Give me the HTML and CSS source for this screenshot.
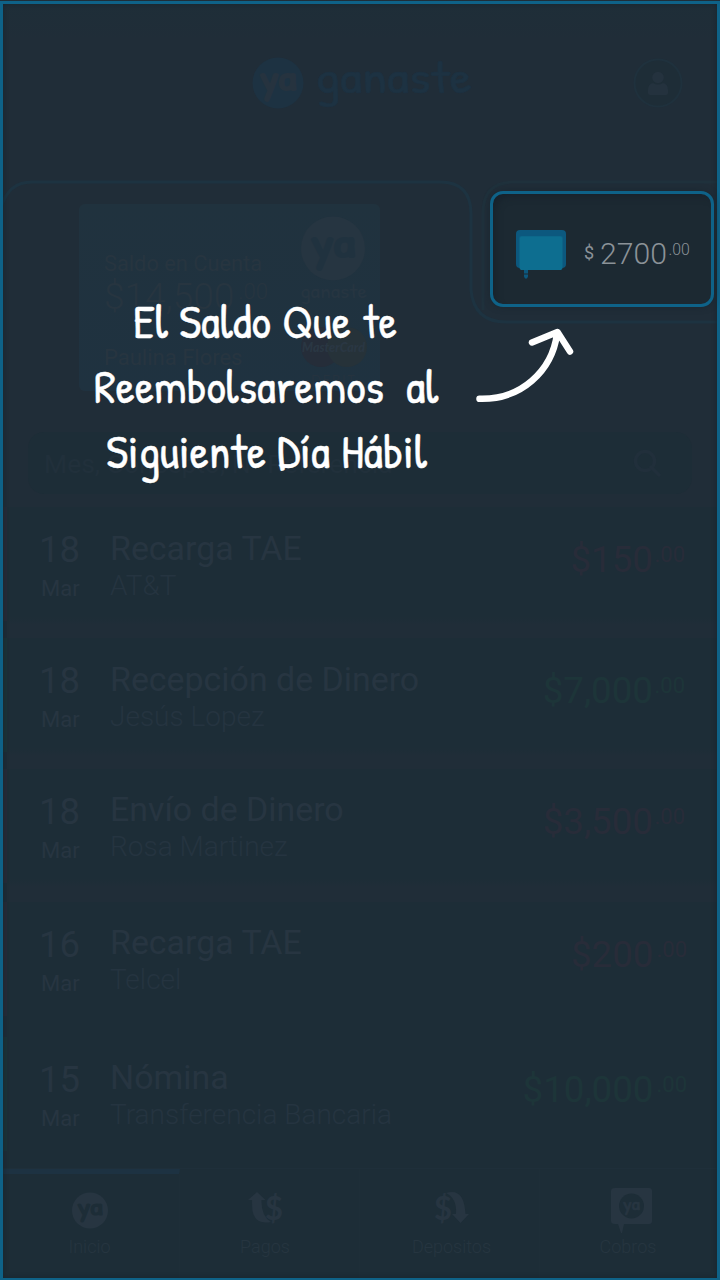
FILE: index.html
```html
<!DOCTYPE html>
<html lang="es">
<head>
<meta charset="utf-8">
<title>ya ganaste</title>
<link rel="stylesheet" href="styles.css">
</head>
<body>
<main class="screen">
  <header class="header">
    <svg class="brand" width="240" height="80" viewBox="0 0 240 80">
      <circle class="blue-fill" cx="30" cy="31" r="25.5"/>
      <text class="mark header-mark" x="12" y="38" textLength="36" lengthAdjust="spacingAndGlyphs">ya</text>
      <text class="wordmark" x="67" y="41" textLength="157" lengthAdjust="spacingAndGlyphs">ganaste</text>
    </svg>
    <svg class="avatar" width="50" height="50" viewBox="0 0 50 50">
      <circle class="avatar-ring" cx="25" cy="25" r="23.5"/>
      <circle class="soft-fill" cx="25" cy="19.5" r="5.8"/>
      <path class="soft-fill" d="M20 25q5 3 10 0q5 1 5 7v3q0 2-2 2H17q-2 0-2-2v-3q0-6 5-7z"/>
    </svg>
  </header>

  <section class="summary">
    <svg class="tabs" width="720" height="150" viewBox="0 0 720 150">
      <path class="tab-quiet" d="M720 4H514Q483 4 483 35V132"/>
      <path class="tab-active" d="M1 30Q8 4 32 4H440Q471 4 471 36V112Q474 144 506 144H720"/>
    </svg>
    <div class="card">
      <div class="card-info">
        <div class="card-label">Saldo en Cuenta</div>
        <div class="card-amount">$14,500<sup>.00</sup></div>
        <div class="card-owner">Paulina Flores</div>
      </div>
      <svg class="card-brand" width="74" height="186" viewBox="0 0 74 186">
        <circle class="card-disc" cx="35" cy="45.500" r="32"/>
        <text class="mark card-mark" x="13" y="54" textLength="44" lengthAdjust="spacingAndGlyphs">ya</text>
        <text class="card-word" x="2" y="95" textLength="67" lengthAdjust="spacingAndGlyphs">ganaste</text>
        <circle class="mc-red" cx="23" cy="144" r="20"/>
        <circle class="mc-gold" cx="49" cy="144" r="20"/>
        <text class="mc-text" x="4" y="149" textLength="63" lengthAdjust="spacingAndGlyphs">MasterCard</text>
        <text class="debit" x="13" y="182" textLength="44">DEBIT</text>
      </svg>
    </div>
  </section>

  <div class="search">
    <span>Mes, Concepto, N° Referencia</span>
    <svg width="28" height="28" viewBox="0 0 28 28"><circle cx="12" cy="12" r="9.5"/><path d="M18 18l8 8"/></svg>
  </div>

  <section class="list">
    <article class="row out"><div class="date"><b>18</b><span>Mar</span></div><div class="detail"><h2>Recarga TAE</h2><p>AT&amp;T</p></div><div class="amount">$150<sup>.00</sup></div></article>
    <article class="row in"><div class="date"><b>18</b><span>Mar</span></div><div class="detail"><h2>Recepción de Dinero</h2><p>Jesús Lopez</p></div><div class="amount">$7,000<sup>.00</sup></div></article>
    <article class="row out third"><div class="date"><b>18</b><span>Mar</span></div><div class="detail"><h2>Envío de Dinero</h2><p>Rosa Martinez</p></div><div class="amount">$3,500<sup>.00</sup></div></article>
    <article class="row out fourth"><div class="date"><b>16</b><span>Mar</span></div><div class="detail"><h2>Recarga TAE</h2><p>Telcel</p></div><div class="amount">$200<sup>.00</sup></div></article>
    <article class="row in fifth"><div class="date"><b>15</b><span>Mar</span></div><div class="detail"><h2>Nómina</h2><p>Transferencia Bancaria</p></div><div class="amount">$10,000<sup>.00</sup></div></article>
  </section>

  <nav class="nav">
    <a class="tab current">
      <svg width="44" height="48" viewBox="0 0 44 48"><circle class="icon-fill" cx="22" cy="24.500" r="18"/><text class="mark nav-mark" x="9.500" y="29" textLength="25" lengthAdjust="spacingAndGlyphs">ya</text></svg>
      <span>Inicio</span>
    </a>
    <a class="tab pagos">
      <svg width="44" height="48" viewBox="0 0 44 48"><path class="icon-fill" d="M14 6L22.500 14H18.500Q18 30 28 36Q12 39 9.500 25Q9 20 9 14H5z"/><text class="dollar" x="22" y="34" textLength="18" lengthAdjust="spacingAndGlyphs">$</text></svg>
      <span>Pagos</span>
    </a>
    <a class="tab depositos">
      <svg width="44" height="48" viewBox="0 0 44 48"><path class="icon-fill" d="M16 7Q34 1 35.500 28H39L30.500 37L22 28H26Q27 12 16 7z"/><text class="dollar" x="4" y="34" textLength="18" lengthAdjust="spacingAndGlyphs">$</text></svg>
      <span>Depositos</span>
    </a>
    <a class="tab cobros">
      <svg width="44" height="48" viewBox="0 0 44 48"><path class="icon-fill" d="M6 2H40Q43 2 43 5V35Q43 38 40 38H15L13 47H12L9 38H6Q2 38 2 35V5Q2 2 6 2z"/><circle class="row-fill" cx="22.500" cy="20" r="12.500"/><text class="mark cobros-mark" x="14" y="24" textLength="17" lengthAdjust="spacingAndGlyphs">ya</text></svg>
      <span>Cobros</span>
    </a>
  </nav>

  <div class="frame"></div>
  <div class="spotlight">
    <svg width="52" height="50" viewBox="0 0 52 50">
      <rect class="note-back" x="1" y="1" width="50" height="38" rx="4"/>
      <rect class="note-edge" x="4" y="7" width="44" height="33" rx="2"/>
      <rect class="note-front" x="5" y="7.500" width="42" height="33.500" rx="1.500"/>
      <path class="note-back" d="M9 41h4v3.500H9zM9 45.500h4v2L12 49.500h-2L9 47.500z"/>
    </svg>
    <span class="currency">$</span><span class="value">2700</span><span class="cents">.00</span>
  </div>
  <svg class="coach" width="720" height="220" viewBox="0 290 720 220">
    <g class="hand">
      <text x="133" y="337.500" textLength="35" lengthAdjust="spacingAndGlyphs">El</text>
      <text x="179" y="337.500" textLength="92" lengthAdjust="spacingAndGlyphs">Saldo</text>
      <text x="282" y="337.500" textLength="69" lengthAdjust="spacingAndGlyphs">Que</text>
      <text x="363" y="337.500" textLength="34" lengthAdjust="spacingAndGlyphs">te</text>
      <text x="94" y="402.500" textLength="290" lengthAdjust="spacingAndGlyphs">Reembolsaremos</text>
      <text x="406" y="402.500" textLength="32.500" lengthAdjust="spacingAndGlyphs">al</text>
      <text x="106" y="467.500" textLength="160" lengthAdjust="spacingAndGlyphs">Siguiente</text>
      <text x="277" y="467.500" textLength="53" lengthAdjust="spacingAndGlyphs">Día</text>
      <text x="341" y="467.500" textLength="86" lengthAdjust="spacingAndGlyphs">Hábil</text>
    </g>
    <path class="arrow" d="M479.500 398.800C521 400 552 371 557 334M532 342.500L557.500 332L570 351.500"/>
  </svg>
</main>
</body>
</html>
```
FILE: styles.css
```css
* { box-sizing: border-box; }
body { margin: 0; background: #202d38; font-family: Roboto, "Liberation Sans", sans-serif; }
.screen { position: relative; width: 720px; height: 1280px; overflow: hidden; display: flex; flex-direction: column; background: linear-gradient(#1e2e38, #202d38 40px); color: #273541; }
text { font-family: "Patrick Hand", Lato, sans-serif; }
.blue-fill { fill: #1d3242; }
.soft-fill { fill: #24323e; }
.icon-fill { fill: #273541; }
.row-fill { fill: #1d2d37; }
.mark { stroke-width: 1.8; }

.header { height: 178px; flex: none; display: grid; grid-template-columns: 1fr 230px 1fr; padding: 52px 37px 0 39px; align-items: start; }
.brand { grid-column: 2; margin-left: 2px; }
.header-mark { font-size: 34px; fill: #26333f; stroke: #26333f; }
.wordmark { font-size: 44px; fill: #1d3242; stroke: #1d3242; stroke-width: .5; }
.avatar { justify-self: end; margin-top: 6px; }
.avatar-ring { fill: #1e2d37; stroke: #1f313d; stroke-width: 2; }

.summary { height: 254px; flex: none; display: grid; }
.tabs, .card { grid-area: 1 / 1; }
.tabs path { fill: none; }
.tab-active { stroke: #1d3341; stroke-width: 3; }
.tab-quiet { stroke: #1f313c; stroke-width: 3; }
.card { width: 301px; height: 187px; margin: 26px 0 0 79px; padding-left: 25px; border-radius: 6px; background: linear-gradient(#20323e, #1f3240); color: #273540; display: flex; justify-content: space-between; white-space: nowrap; }
.card-info { padding-top: 46px; width: 180px; }
.card-label { font-size: 21.800px; line-height: 28px; }
.card-amount { font-size: 37px; line-height: 38px; font-weight: 300; }
.card-amount sup { font-size: 22px; line-height: 0; vertical-align: 10px; margin-left: 4px; }
.card-owner { margin-top: 28px; font-size: 22px; line-height: 28px; }
.card-brand { margin-right: 8px; margin-top: -1px; flex: none; }
.card-disc { fill: #263541; }
.card-mark { font-size: 41px; fill: #20323f; stroke: #20323f; }
.card-word { font-size: 20px; fill: #263541; }
.mc-red { fill: #252d39; }
.mc-gold { fill: #263239; }
.mc-text { font-family: Lato, sans-serif; font-size: 13px; font-weight: 900; font-style: italic; fill: #2a3743; }
.debit { font-family: Lato, sans-serif; font-size: 13px; fill: #25333f; }

.search { width: 664px; height: 62px; flex: none; margin-left: 28px; padding: 0 31px 0 16px; border-radius: 16px; background: #1d2d37; display: flex; align-items: center; justify-content: space-between; font-size: 26.500px; color: #21303b; }
.search svg { fill: none; stroke: #212f3b; stroke-width: 3.500; stroke-linecap: round; }

.list { padding-top: 13px; }
.row { height: 131px; display: grid; grid-template-columns: 107px 1fr auto; padding: 0 35px 0 3px; background: linear-gradient(#1d2d37 110px, #202d38 118px); border-left: 7px solid #272b38; white-space: nowrap; border-image: linear-gradient(#262b38 113px, #1e2c37 113px) 1 / 0 0 0 7px; }
.row.in { border-image-source: linear-gradient(#1c3338 113px, #1e2c37 113px); }
.row.third { height: 133px; }
.row.fourth { height: 135px; }
.row.fourth, .row.fifth { background: #1d2d37; padding-right: 33px; }
.date { padding: 22px 0 0 29px; }
.date b { display: block; font-size: 36.500px; line-height: 42px; font-weight: 400; }
.date span { display: block; margin: 5px 0 0 2px; font-size: 22px; line-height: 26px; }
.detail { padding-top: 22px; margin-left: -7px; }
.detail h2 { margin: 0; font-size: 33.900px; line-height: 40px; font-weight: 400; }
.detail p { margin: 0; font-size: 28px; line-height: 33px; font-weight: 300; color: #253440; }
.third .detail, .fourth .detail, .fifth .detail { padding-top: 21px; }
.amount { padding-top: 30px; font-size: 36.700px; line-height: 46px; color: #282c39; }
.amount sup { font-size: 22px; line-height: 0; vertical-align: 10px; margin-left: 1.500px; }
.fourth .amount sup, .fifth .amount sup { margin-left: 3px; }
.in .amount { color: #1d3539; }

.nav { height: 112px; display: grid; grid-template-columns: repeat(4, 1fr); background: #1d2d37; border-top: 1px solid #1f2f3a; }
.tab { display: flex; flex-direction: column; align-items: center; padding-top: 17px; border-right: 1px solid #1e2e38; font-size: 18px; line-height: 24px; font-weight: 300; color: #263540; }
.tab svg { margin-bottom: 1px; }
.current { border-top: 5px solid #1d3242; padding-top: 12px; }
.pagos { padding-right: 9px; }
.depositos { padding-left: 4px; }
.cobros { padding-right: 3px; }
.cobros svg { margin-left: 5px; }
.nav-mark { font-size: 24px; fill: #1d2d37; stroke: #1d2d37; stroke-width: 1.200; }
.cobros-mark { font-size: 16px; fill: #273541; stroke: #273541; stroke-width: .6; }
.dollar { font-family: Lato, sans-serif; font-size: 32px; font-weight: 700; fill: #273541; }

.frame { position: absolute; inset: 1px 0 -1px; border: 3px solid #0e6288; box-shadow: inset 0 0 5px #18242d; }
.spotlight { position: absolute; left: 490px; top: 191px; width: 224px; height: 116px; border: 3px solid #0e6288; border-radius: 13px; background: #1c2932; box-shadow: 0 0 6px #1a262f, inset 6px 6px 8px -5px #16202a; color: #8b9298; padding: 35px 0 0 22px; display: flex; align-items: flex-start; }
.currency { margin: 13px 0 0 17px; width: 16px; font-size: 18px; line-height: 22px; }
.value { margin-top: 7px; width: 68.500px; font-size: 30.200px; line-height: 36px; font-weight: 300; }
.cents { margin-top: 11px; font-size: 15.800px; line-height: 20px; font-weight: 300; }
.note-back { fill: #0c587e; }
.note-edge { fill: #0c6387; }
.note-front { fill: #0d6e90; }
.coach { position: absolute; left: 0; top: 290px; }
.hand { fill: #fff; stroke: #fff; stroke-width: .4; stroke-linejoin: round; }
.hand text { font-size: 46px; }
.arrow { fill: none; stroke: #fff; stroke-width: 6.500; stroke-linecap: round; stroke-linejoin: round; }
```
